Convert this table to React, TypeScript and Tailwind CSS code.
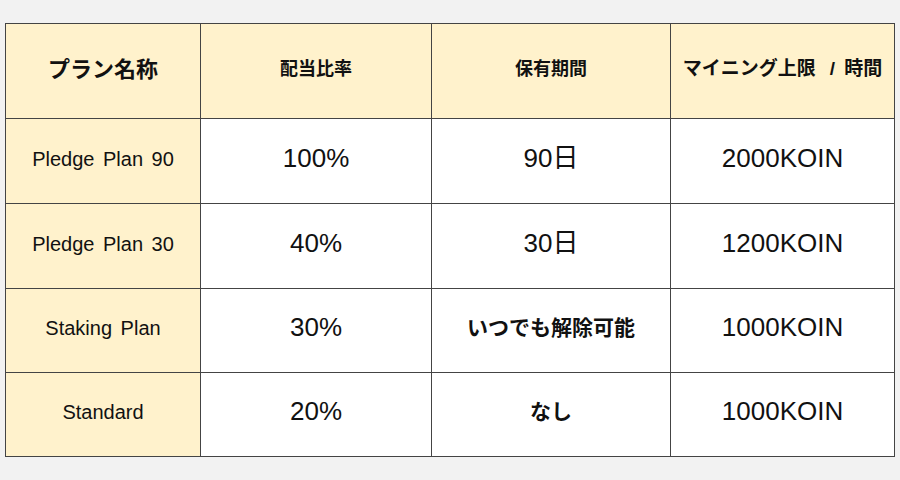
import React from "react";

const font = {
  fontFamily: '"Liberation Sans", Arial, "Noto Sans CJK JP", sans-serif',
};

interface Plan {
  name: string;
  ratio: string;
  period: string;
  periodBold?: boolean;
  limit: string;
}

const plans: Plan[] = [
  { name: "Pledge Plan 90", ratio: "100%", period: "90日", limit: "2000KOIN" },
  { name: "Pledge Plan 30", ratio: "40%", period: "30日", limit: "1200KOIN" },
  { name: "Staking Plan", ratio: "30%", period: "いつでも解除可能", periodBold: true, limit: "1000KOIN" },
  { name: "Standard", ratio: "20%", period: "なし", periodBold: true, limit: "1000KOIN" },
];

export default function App() {
  return (
    <div className="w-[900px] h-[480px] bg-[#f2f2f2] pt-[23px] pl-[5px] text-[#111]" style={font}>
      <div className="w-[890px] grid grid-cols-[194px_230px_238px_223px] grid-rows-[94px_84px_84px_83px_83px] gap-px p-px bg-[#444]">
        {/* ヘッダー */}
        <div className="bg-[#fff2cc] flex items-center justify-center pb-[3px] text-[22px] font-bold">
          プラン名称
        </div>
        <div className="bg-[#fff2cc] flex items-center justify-center pb-[3px] text-[18px] font-bold">
          配当比率
        </div>
        <div className="bg-[#fff2cc] flex items-center justify-center pb-[3px] text-[18px] font-bold">
          保有期間
        </div>
        <div className="bg-[#fff2cc] flex items-center justify-center pb-[3px] text-[19px] font-bold">
          <span>マイニング上限</span>
          <span className="ml-[14px] mr-[9px]">/</span>
          <span>時間</span>
        </div>

        {plans.map((p) => (
          <React.Fragment key={p.name}>
            <div className="bg-[#fff2cc] flex items-center justify-center pb-[5px] text-[20px] [word-spacing:3px]">
              {p.name}
            </div>
            <div className="bg-white flex items-center justify-center pb-[6px] text-[26px]">
              {p.ratio}
            </div>
            <div
              className={
                p.periodBold
                  ? "bg-white flex items-center justify-center pb-[5px] text-[21px] font-bold"
                  : "bg-white flex items-center justify-center pb-[6px] text-[26px]"
              }>
              {p.period}
            </div>
            <div className="bg-white flex items-center justify-center pb-[6px] text-[26px]">
              {p.limit}
            </div>
          </React.Fragment>
        ))}
      </div>
    </div>
  );
}
